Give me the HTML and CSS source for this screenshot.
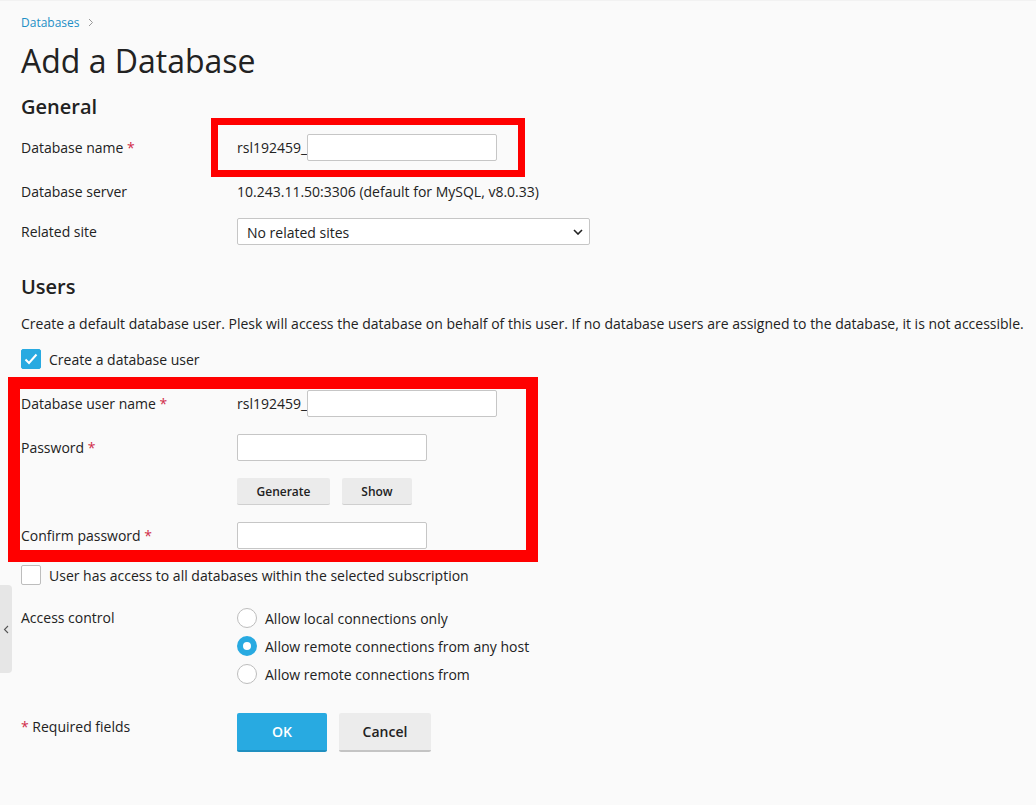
FILE: index.html
```html
<!DOCTYPE html>
<html lang="en">
<head>
<meta charset="utf-8">
<title>Add a Database</title>
<link rel="stylesheet" href="styles.css">
</head>
<body>
<div class="page">
  <nav class="breadcrumbs"><a href="#">Databases</a><svg class="crumb-sep" width="6" height="9" viewBox="0 0 6 9"><path d="M1 1l3.5 3.5L1 8" fill="none" stroke="#999" stroke-width="1"/></svg></nav>
  <h1 class="title">Add a Database</h1>

  <h2 class="section-title">General</h2>
  <div class="form-row row-dbname">
    <label class="field-label">Database name <span class="req">*</span></label>
    <div class="field"><span class="prefix">rsl192459_</span><input class="text-input w-189" type="text"></div>
  </div>
  <div class="form-row row-server">
    <label class="field-label">Database server</label>
    <div class="field"><span class="static">10.243.11.50:3306 (default for MySQL, v8.0.33)</span></div>
  </div>
  <div class="form-row row-site">
    <label class="field-label">Related site</label>
    <div class="field">
      <div class="select">
        <span>No related sites</span>
        <svg class="select-arrow" width="10" height="6" viewBox="0 0 10 6"><path d="M1 1l4 4 4-4" fill="none" stroke="#222" stroke-width="1.6"/></svg>
      </div>
    </div>
  </div>

  <h2 class="section-title users-title">Users</h2>
  <p class="hint">Create a default database user. Plesk will access the database on behalf of this user. If no database users are assigned to the database, it is not accessible.</p>
  <div class="check-row check-create">
    <span class="checkbox checked"><svg width="14" height="12" viewBox="0 0 14 12"><path d="M1.5 6.5l3.5 3.5 7.5-8.5" fill="none" stroke="#fff" stroke-width="2"/></svg></span>
    <span class="check-label">Create a database user</span>
  </div>

  <div class="form-row row-user">
    <label class="field-label">Database user name <span class="req">*</span></label>
    <div class="field"><span class="prefix">rsl192459_</span><input class="text-input w-189" type="text"></div>
  </div>
  <div class="form-row">
    <label class="field-label">Password <span class="req">*</span></label>
    <div class="field"><input class="text-input w-189" type="password"></div>
  </div>
  <div class="form-row">
    <span></span>
    <div class="field btns-small"><button class="btn-small gen">Generate</button><button class="btn-small show">Show</button></div>
  </div>
  <div class="form-row">
    <label class="field-label">Confirm password <span class="req">*</span></label>
    <div class="field"><input class="text-input w-189" type="password"></div>
  </div>
  <div class="check-row check-all">
    <span class="checkbox"></span>
    <span class="check-label">User has access to all databases within the selected subscription</span>
  </div>

  <div class="form-row row-access">
    <label class="field-label access-label">Access control</label>
    <div class="radios">
      <div class="radio-row"><span class="radio"></span><span class="radio-label">Allow local connections only</span></div>
      <div class="radio-row"><span class="radio on"></span><span class="radio-label">Allow remote connections from any host</span></div>
      <div class="radio-row"><span class="radio"></span><span class="radio-label">Allow remote connections from</span></div>
    </div>
  </div>

  <div class="form-row row-actions">
    <div class="field-label"><span class="req">*</span> Required fields</div>
    <div class="actions"><button class="btn btn-primary">OK</button><button class="btn btn-cancel">Cancel</button></div>
  </div>
</div>

<div class="side-tab"><svg width="6" height="9" viewBox="0 0 6 9"><path d="M5 1L1.5 4.5 5 8" fill="none" stroke="#555" stroke-width="1.1"/></svg></div>

<div class="annot annot-1"></div>
<div class="annot annot-2"></div>
</body>
</html>
```

FILE: styles.css
```css
html, body {
  margin: 0;
  padding: 0;
}
body {
  background: #fafafa;
  font-family: "Open Sans", "Noto Sans", sans-serif;
  font-size: 14px;
  color: #222;
  position: relative;
  min-height: 805px;
  border-top: 1px solid #f2f2f2;
  box-sizing: border-box;
}
.page {
  padding: 12px 21px 0 21px;
}
.breadcrumbs {
  height: 20px;
  line-height: 20px;
  font-size: 12px;
  display: flex;
  align-items: center;
}
.breadcrumbs a {
  color: #1e8fc6;
  text-decoration: none;
}
.crumb-sep {
  margin-left: 8px;
  margin-top: -1px;
}
.title {
  margin: 7px 0 0 0;
  font-size: 32px;
  font-weight: 400;
  line-height: 41px;
  color: #222;
}
.section-title {
  margin: 13px 0 0 0;
  font-size: 20px;
  font-weight: 600;
  line-height: 26px;
  color: #222;
}
.form-row {
  display: grid;
  grid-template-columns: 216px auto;
  align-items: start;
  margin-top: 17px;
}
.row-dbname { margin-top: 14px; }
.row-site { margin-top: 13px; }
.field-label {
  line-height: 27px;
  color: #222;
}
.req {
  color: #d02c49;
}
.field {
  display: flex;
  align-items: center;
  min-height: 27px;
}
.prefix {
  line-height: 27px;
}
.static {
  line-height: 27px;
}
.text-input {
  height: 27px;
  box-sizing: border-box;
  border: 1px solid #c6c6c6;
  border-radius: 2px;
  background: #fff;
  font: inherit;
  padding: 0 6px;
  margin: 0;
}
.w-189 { width: 190px; }
.select {
  width: 353px;
  height: 27px;
  box-sizing: border-box;
  border: 1px solid #c6c6c6;
  border-radius: 2px;
  background: #fff;
  display: flex;
  align-items: center;
  justify-content: space-between;
  padding: 1px 6px 0 9px;
}
.users-title { margin-top: 29px; }
.hint {
  margin: 14px 0 0 0;
  line-height: 20px;
  white-space: nowrap;
}
.check-row {
  display: flex;
  align-items: center;
  height: 20px;
}
.check-create { margin-top: 15px; }
.check-all { margin-top: 16px; }
.checkbox {
  width: 20px;
  height: 20px;
  box-sizing: border-box;
  border: 1px solid #bdbdbd;
  border-radius: 2px;
  background: #fff;
  display: flex;
  align-items: center;
  justify-content: center;
  margin-right: 8px;
}
.checkbox.checked {
  background: #28aae1;
  border-color: #28aae1;
}
.row-user { margin-top: 21px; }
.btns-small {
  gap: 12px;
}
.btn-small {
  height: 27px;
  border: none;
  border-bottom: 1px solid #cfcfcf;
  border-radius: 2px;
  background: #ebebeb;
  font-family: inherit;
  font-size: 12px;
  font-weight: 600;
  color: #222;
  padding: 1px 0 0 0;
}
.btn-small.gen { width: 93px; }
.btn-small.show { width: 70px; }
.row-access { margin-top: 23px; }
.access-label { line-height: 20px; }
.radios {
  display: flex;
  flex-direction: column;
  gap: 8px;
}
.radio-row {
  display: flex;
  align-items: center;
  height: 20px;
}
.radio {
  width: 20px;
  height: 20px;
  box-sizing: border-box;
  border: 1px solid #bdbdbd;
  border-radius: 50%;
  background: #fff;
  margin-right: 8px;
}
.radio.on {
  border: 6px solid #28aae1;
}
.row-actions { margin-top: 29px; }
.actions {
  display: flex;
  gap: 12px;
}
.btn {
  height: 39px;
  border: none;
  border-radius: 2px;
  font-family: inherit;
  font-size: 14px;
  font-weight: 600;
  padding: 0;
}
.btn-primary {
  width: 90px;
  background: #28aae1;
  color: #fff;
  border-bottom: 2px solid #1f8fc0;
}
.btn-cancel {
  width: 92px;
  background: #ececec;
  color: #222;
  border-bottom: 2px solid #c4c4c4;
}
.side-tab {
  position: absolute;
  left: 0;
  top: 584px;
  width: 12px;
  height: 88px;
  background: #e6e6e6;
  border-radius: 0 4px 4px 0;
  display: flex;
  align-items: center;
  justify-content: center;
}
.annot {
  position: absolute;
  border-style: solid;
  border-color: #ff0000;
  box-sizing: border-box;
  pointer-events: none;
}
.annot-1 {
  left: 211px;
  top: 117px;
  width: 314px;
  height: 59px;
  border-width: 7px;
}
.annot-2 {
  left: 8px;
  top: 376px;
  width: 530px;
  height: 185px;
  border-width: 12px;
}
```
